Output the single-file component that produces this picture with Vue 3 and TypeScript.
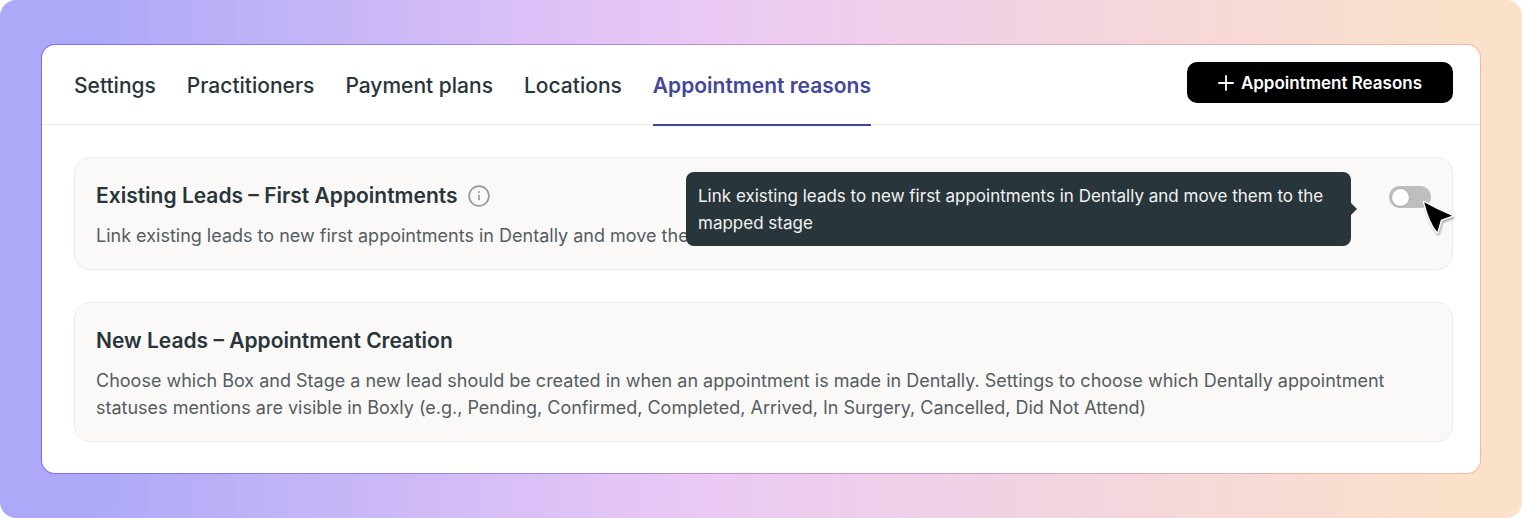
<script setup lang="ts">
import { ref } from 'vue'

const tabs: string[] = ['Settings', 'Practitioners', 'Payment plans', 'Locations', 'Appointment reasons']
const active = ref('Appointment reasons')
const linkLeads = ref(false)
</script>

<template>
  <main class="backdrop">
    <section class="panel">
      <header class="header">
        <nav class="tabs" aria-label="Integration settings">
          <button
            v-for="tab in tabs"
            :key="tab"
            type="button"
            class="tab"
            :class="{ active: tab === active }"
            @click="active = tab"
          >{{ tab }}</button>
        </nav>
        <button type="button" class="add">
          <svg class="plus" viewBox="0 0 16 16" aria-hidden="true">
            <path d="M8 .9v14.2M.9 8h14.2" fill="none" stroke="currentColor" stroke-width="1.8" stroke-linecap="round" />
          </svg>
          <span>Appointment Reasons</span>
        </button>
      </header>

      <div class="cards">
        <article class="card">
          <div class="row">
            <div class="copy">
              <h2 class="title">
                <label for="link-leads">Existing Leads – First Appointments</label>
                <svg class="info" viewBox="0 0 22 22" aria-hidden="true">
                  <circle cx="11" cy="11" r="9.9" fill="none" stroke="currentColor" stroke-width="1.7" />
                  <circle cx="11" cy="7" r="1" fill="currentColor" />
                  <path d="M11 9.8v5.4" stroke="currentColor" stroke-width="1.7" />
                </svg>
              </h2>
              <p class="text">Link existing leads to new first appointments in Dentally and move them to the mapped stage</p>
            </div>
            <div class="control">
              <input id="link-leads" v-model="linkLeads" type="checkbox" class="switch" aria-describedby="link-tip" />
              <svg class="cursor" viewBox="0 0 36 40" aria-hidden="true">
                <path d="M4.2 4.2Q17 11.5 32 17.8L20.9 21.7L17.3 34Q9.5 25 4.2 4.2Z" fill="#000" stroke="#fff" stroke-width="2.8" stroke-linejoin="round" paint-order="stroke" />
              </svg>
              <div id="link-tip" role="tooltip" class="tooltip">
                Link existing leads to new first appointments in Dentally and move them to the mapped stage
              </div>
            </div>
          </div>
        </article>

        <article class="card">
          <h2 class="title">New Leads – Appointment Creation</h2>
          <p class="text">
            Choose which Box and Stage a new lead should be created in when an appointment is made in Dentally.
            Settings to choose which Dentally appointment statuses mentions are visible in Boxly (e.g., Pending,
            Confirmed, Completed, Arrived, In Surgery, Cancelled, Did Not Attend)
          </p>
        </article>
      </div>
    </section>
  </main>
</template>

<style>
body {
  margin: 0;
  background: #fff;
}
</style>

<style scoped>
.backdrop {
  box-sizing: border-box;
  padding: 44px 41px;
  border-radius: 16px;
  background: linear-gradient(90deg, #ada9f8 0%, #ada9f8 6%, #eac8f5 45%, #fbe0ca 95%, #fbe0ca 100%);
  font-family: Inter, "Liberation Sans", sans-serif;
  color: #28353a;
}

.panel {
  border: 1px solid transparent;
  border-radius: 14px;
  background:
    linear-gradient(#fff, #fff) padding-box,
    linear-gradient(90deg, #7770ee 0%, #b58fe0 44%, #f8b8a2 95%) border-box;
}

.header {
  display: flex;
  justify-content: space-between;
  align-items: flex-start;
  height: 79px;
  padding: 0 27px 0 32px;
  border-bottom: 1px solid #ebebeb;
}

.tabs {
  display: flex;
  gap: 31px;
}

.tab {
  height: 81px;
  padding: 2px 0 0;
  border: 0;
  border-bottom: 2px solid transparent;
  background: none;
  font: 500 21px/24px Inter, "Liberation Sans", sans-serif;
  color: inherit;
  white-space: nowrap;
  cursor: pointer;
}

.tab.active {
  border-color: #43479c;
  font-weight: 600;
  color: #43479c;
}

.add {
  display: flex;
  align-items: center;
  gap: 7px;
  height: 41px;
  margin-top: 17px;
  padding: 0 31px;
  border: 0;
  border-radius: 10px;
  background: #000;
  font: 600 17px/24px Inter, "Liberation Sans", sans-serif;
  color: #fff;
  white-space: nowrap;
  cursor: pointer;
}

.plus {
  width: 16px;
  height: 16px;
}

.cards {
  display: flex;
  flex-direction: column;
  gap: 32px;
  padding: 32px 27px 31px 32px;
}

.card {
  padding: 24px 21px 20px;
  border: 1px solid #ebebea;
  border-radius: 16px;
  background: #faf9f8;
}

.row {
  display: flex;
  justify-content: space-between;
}

.title {
  display: flex;
  align-items: center;
  gap: 10px;
  margin: 0 0 12px;
  font-size: 21px;
  font-weight: 600;
  line-height: 28px;
}

.info {
  width: 22px;
  height: 22px;
  color: #969b9d;
}

.text {
  margin: 0;
  font-size: 18px;
  line-height: 27px;
  color: #535d61;
}

.control {
  position: relative;
  flex: none;
  width: 42px;
}

.switch {
  appearance: none;
  display: block;
  width: 42px;
  height: 22px;
  margin: 4px 0 0;
  padding: 3px;
  border-radius: 11px;
  background: #bfbebd;
  cursor: pointer;
}

.switch::before {
  content: "";
  display: block;
  width: 17px;
  height: 17px;
  border-radius: 50%;
  background: #fff;
  box-shadow: 0 0 2px rgba(0, 0, 0, 0.25);
}

.switch:checked::before {
  margin-left: 19px;
}

.cursor {
  position: absolute;
  top: 16px;
  left: 31px;
  width: 36px;
  height: 40px;
  filter: drop-shadow(1px 2px 1px rgba(0, 0, 0, 0.3));
  pointer-events: none;
}

.tooltip {
  position: absolute;
  top: -10px;
  right: 80px;
  box-sizing: border-box;
  width: 665px;
  padding: 11px 12px 9px;
  border-radius: 8px;
  background: #28353a;
  font-size: 17px;
  line-height: 27px;
  color: #f2f3f3;
}

.tooltip::after {
  content: "";
  position: absolute;
  top: 50%;
  left: 100%;
  margin-top: -6px;
  border: 6px solid transparent;
  border-right-width: 0;
  border-left-color: #28353a;
}
</style>
